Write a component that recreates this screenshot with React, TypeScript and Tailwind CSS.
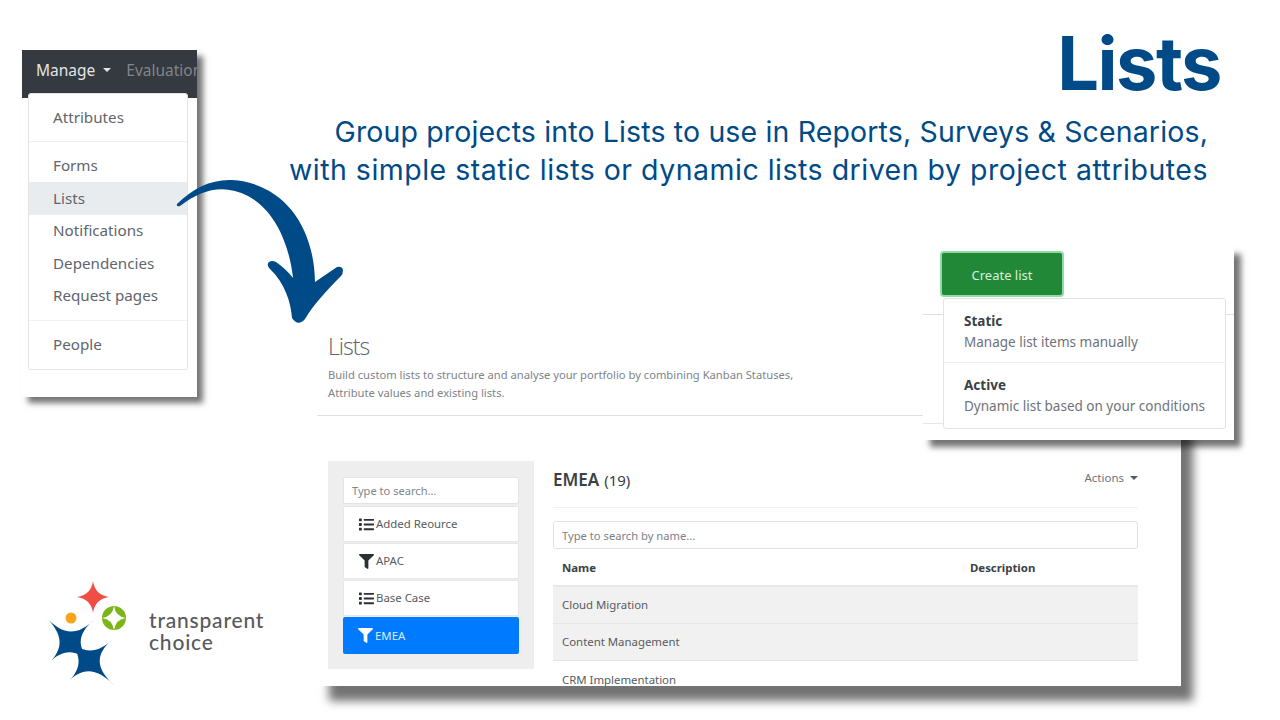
import { FaFilter, FaList } from "react-icons/fa";

const ui = "font-['Noto_Sans',sans-serif]";

const Caret = ({ className }: { className: string }) => (
  <span className={`inline-block h-0 w-0 border-x-[4px] border-t-[4px] border-x-transparent ${className}`} />
);

const Star = ({ cx, cy, r, k, fill }: { cx: number; cy: number; r: number; k: number; fill: string }) => {
  const d = `M${cx} ${cy - r}Q${cx + k} ${cy - k} ${cx + r} ${cy}Q${cx + k} ${cy + k} ${cx} ${cy + r}Q${cx - k} ${cy + k} ${cx - r} ${cy}Q${cx - k} ${cy - k} ${cx} ${cy - r}Z`;
  return <path d={d} fill={fill} />;
};

const BlueStar = ({ cx, cy }: { cx: number; cy: number }) => {
  const at = (x: number, y: number) => `${cx + x} ${cy + y}`;
  return (
    <path
      fill="#004a87"
      d={`M${at(-25, -26)}C${at(-7, -6)} ${at(7, -6)} ${at(24, -22)}C${at(6, -7)} ${at(6, 7)} ${at(26, 25)}C${at(7, 6)} ${at(-7, 6)} ${at(-22, 22)}C${at(-6, 7)} ${at(-6, -7)} ${at(-25, -26)}Z`}
    />
  );
};

const Logo = () => (
  <div className="absolute left-[40px] top-[576px] flex items-center">
    <svg width="92" height="112" viewBox="40 576 92 112">
      <Star cx={93} cy={597} r={16} k={2} fill="#f04e45" />
      <circle cx={71} cy={618} r={5.5} fill="#f7a51c" />
      <circle cx={114} cy={618} r={12} fill="#7cb518" />
      <Star cx={114} cy={618} r={12} k={1.5} fill="#ffffff" />
      <BlueStar cx={70} cy={642} />
      <BlueStar cx={89} cy={661} />
    </svg>
    <div className="ml-[17px] mt-[-2px] font-['Lato',sans-serif] text-[21px] font-medium leading-[22px] tracking-[0.8px] text-[#58595b]">
      <div>transparent</div>
      <div>choice</div>
    </div>
  </div>
);

const menuTop = ["Forms", "Lists", "Notifications", "Dependencies", "Request pages"];

const ManageMenu = () => (
  <div className={`absolute left-[22px] top-[50px] h-[347px] w-[175px] bg-white shadow-[6px_6px_6px_rgba(0,0,0,0.55)] ${ui}`}>
    <div className="flex h-[48px] items-start overflow-hidden bg-[#343a40] pl-[14px] pt-[8px] text-[15.5px] leading-[24px]">
      <span className="text-[#e4e5e6]">Manage</span>
      <Caret className="ml-[8px] mt-[10px] border-t-[#e4e5e6]" />
      <span className="ml-[15px] whitespace-nowrap text-[#81858a]">Evaluation</span>
    </div>
    <div className="relative ml-[6px] mt-[-5px] h-[277px] w-[160px] rounded-[3px] border border-[#e3e4e6] bg-white pt-[7px] text-[15.2px] text-[#5f656b]">
      <div className="flex h-[32px] items-center pl-[24px]">Attributes</div>
      <div className="mb-[7.5px] mt-[8px] h-px bg-[#eef0f1]" />
      {menuTop.map((item) => (
        <div
          key={item}
          className={`flex h-[32.5px] items-center pl-[24px] ${item === "Lists" ? "bg-[#e9ecef]" : ""}`}
        >
          {item}
        </div>
      ))}
      <div className="mb-[8px] mt-[7.5px] h-px bg-[#eef0f1]" />
      <div className="flex h-[32px] items-center pl-[24px]">People</div>
    </div>
  </div>
);

const lists = [
  { name: "Added Reource", Icon: FaList },
  { name: "APAC", Icon: FaFilter },
  { name: "Base Case", Icon: FaList },
];

const Sidebar = () => (
  <div className="h-[208px] w-[206px] shrink-0 bg-[#eeeeee] px-[15px] pt-[16px]">
    <div className="flex h-[27px] items-center rounded-[2px] border border-[#e2e3e6] bg-white pl-[8px] pt-[2px] text-[11.1px] text-[#80868c]">
      Type to search...
    </div>
    <div className="mt-[2px] flex flex-col gap-[1px]">
      {lists.map(({ name, Icon }) => (
        <div
          key={name}
          className="flex h-[36px] items-center rounded-[2px] border border-[#e6e7e9] bg-white pl-[15px] text-[11.4px] text-[#555b61]"
        >
          <Icon className="mr-[2px] text-[15px] text-[#2b3035]" />
          {name}
        </div>
      ))}
      <div className="flex h-[37px] items-center rounded-[2px] bg-[#007bff] pl-[15px] text-[11.4px] text-[#dcecff]">
        <FaFilter className="mr-[2px] text-[15px] text-white" />
        EMEA
      </div>
    </div>
  </div>
);

const rows = ["Cloud Migration", "Content Management", "CRM Implementation"];

const ListDetail = () => (
  <div className="ml-[19px] w-[585px] shrink-0">
    <div className="flex h-[47px] items-start justify-between border-b border-[#eef0f1]">
      <div className="mt-[6px] text-[#3a4046]">
        <span className="text-[17px] font-semibold">EMEA</span>
        <span className="ml-[5px] text-[15px]">(19)</span>
      </div>
      <div className="mt-[8px] flex items-center text-[11.5px] text-[#6d7379]">
        Actions
        <Caret className="ml-[6px] border-x-[3px] border-t-[3px] border-t-[#555b61]" />
      </div>
    </div>
    <div className="mt-[13px] flex h-[28px] items-center rounded-[3px] border border-[#dfe1e4] pl-[8px] pt-[2px] text-[11.2px] text-[#7b8187]">
      Type to search by name...
    </div>
    <div className="flex h-[38px] items-center border-b-2 border-[#e6e8ea] pt-[2px] text-[11.4px] font-bold text-[#3a4046]">
      <div className="w-[417px] pl-[9px]">Name</div>
      <div>Description</div>
    </div>
    {rows.map((row, i) => (
      <div
        key={row}
        className={`flex h-[37px] items-center pl-[9px] text-[11.4px] text-[#555b61] ${i < 2 ? "border-b border-[#e3e5e8] bg-[#f1f1f2]" : "bg-white"}`}
      >
        {row}
      </div>
    ))}
  </div>
);

const ListsPage = () => (
  <div className={`absolute left-[317px] top-[320px] h-[366px] w-[864px] bg-white shadow-[12px_15px_9px_rgba(0,0,0,0.55)] ${ui}`}>
    <div className="h-[96px] w-[606px] border-b border-[#dedfe1] pl-[11px]">
      <div className="pt-[11px] font-['Open_Sans',sans-serif] text-[23px] font-light leading-[30px] tracking-[-1px] text-[#5d646c]">Lists</div>
      <p className="mt-[5px] text-[11.2px] leading-[18px] text-[#7d8389]">
        Build custom lists to structure and analyse your portfolio by combining Kanban Statuses,
        <br />
        Attribute values and existing lists.
      </p>
    </div>
    <div className="ml-[11px] mt-[45px] flex h-[225px] items-start overflow-hidden">
      <Sidebar />
      <ListDetail />
    </div>
  </div>
);

const CreatePanel = () => (
  <div className={`absolute left-[923px] top-[247px] h-[193px] w-[311px] bg-white shadow-[7px_7px_6px_rgba(0,0,0,0.55)] ${ui}`}>
    <div className="absolute left-0 right-0 top-[67px] h-px bg-[#dedfe1]" />
    <div className="absolute bottom-[16px] left-0 h-px w-[20px] bg-[#e6e7e9]" />
    <button className="absolute left-[17px] top-[4px] h-[46px] w-[124px] rounded-[4px] border-2 border-[#8fdba6] bg-[#218838] pt-[3px] text-[13px] text-[#d5f0dc]">
      Create list
    </button>
    <div className="absolute left-[20px] top-[51px] h-[131px] w-[283px] rounded-[3px] border border-[#e1e3e5] bg-white text-[13.5px] leading-[21px]">
      <div className="h-[64px] border-b border-[#eef0f1] pl-[20px] pt-[12px]">
        <div className="font-bold text-[#3a4046]">Static</div>
        <div className="text-[#6d7379]">Manage list items manually</div>
      </div>
      <div className="pl-[20px] pt-[12px]">
        <div className="font-bold text-[#3a4046]">Active</div>
        <div className="text-[#6d7379]">Dynamic list based on your conditions</div>
      </div>
    </div>
  </div>
);

const Arrow = () => (
  <svg className="absolute left-[170px] top-[170px]" width="180" height="160" viewBox="170 170 180 160">
    <path
      fill="#004a87"
      d="M177 204C193 188 212 179 232 180C280 183 314 222 315 282L337 267Q342 266 343 270Q343 274 341 276C328 289 313 305 305 319Q298 327 292 318C291 303 285 283 270 269Q266 265 269 262Q272 260 276 262Q286 269 293 278C290 250 278 212 248 196C225 184 203 188 180 206Q176 207 177 204Z"
    />
  </svg>
);

export default function App() {
  return (
    <div className="relative h-[720px] w-[1280px] overflow-hidden bg-white">
      <div className="flex flex-col items-end pr-[72px] pt-[20px] text-[#004a87]">
        <h1 className="mr-[-13px] font-['Inter',sans-serif] text-[74px] font-bold leading-[86px] tracking-[-1.5px]">Lists</h1>
        <p className="mt-[7px] text-right font-['Inter',sans-serif] text-[28.5px] leading-[38px]">
          <span className="tracking-[0.14px]">Group projects into Lists to use in Reports, Surveys &amp; Scenarios,</span>
          <br />
          <span className="tracking-[0.5px]">with simple static lists or dynamic lists driven by project attributes</span>
        </p>
      </div>
      <ManageMenu />
      <ListsPage />
      <CreatePanel />
      <Arrow />
      <Logo />
    </div>
  );
}
